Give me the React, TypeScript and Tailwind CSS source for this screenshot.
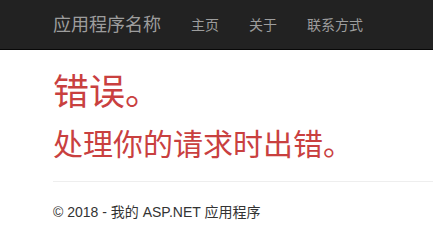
const font = {
  fontFamily:
    '"Liberation Sans", "Noto Sans CJK SC", sans-serif',
};

function Navbar() {
  return (
    <div className="h-[50px] bg-[#222222] border-b border-[#080808]">
      <div className="flex items-center h-full pl-[38px]">
        <a className="px-[15px] text-[18px] leading-[20px] text-[#9d9d9d]">应用程序名称</a>
        <ul className="flex items-center">
          <li className="px-[15px] text-[14px] leading-[20px] text-[#9d9d9d]">主页</li>
          <li className="px-[15px] text-[14px] leading-[20px] text-[#9d9d9d]">关于</li>
          <li className="px-[15px] text-[14px] leading-[20px] text-[#9d9d9d]">联系方式</li>
        </ul>
      </div>
    </div>
  );
}

export default function App() {
  return (
    <div className="w-[433px] h-[239px] bg-white overflow-hidden" style={font}>
      <Navbar />
      <div className="pl-[53px]">
        <h1 className="mt-[23px] text-[36px] leading-[1.1] text-[#c9403f]">错误。</h1>
        <h2 className="mt-[15px] text-[30px] leading-[1.1] text-[#c9403f]">处理你的请求时出错。</h2>
        <hr className="mt-[20px] border-t border-[#eeeeee]" />
        <footer className="mt-[20px] text-[14px] leading-[20px] text-[#333333]">
          © 2018 - 我的 ASP.NET 应用程序
        </footer>
      </div>
    </div>
  );
}
